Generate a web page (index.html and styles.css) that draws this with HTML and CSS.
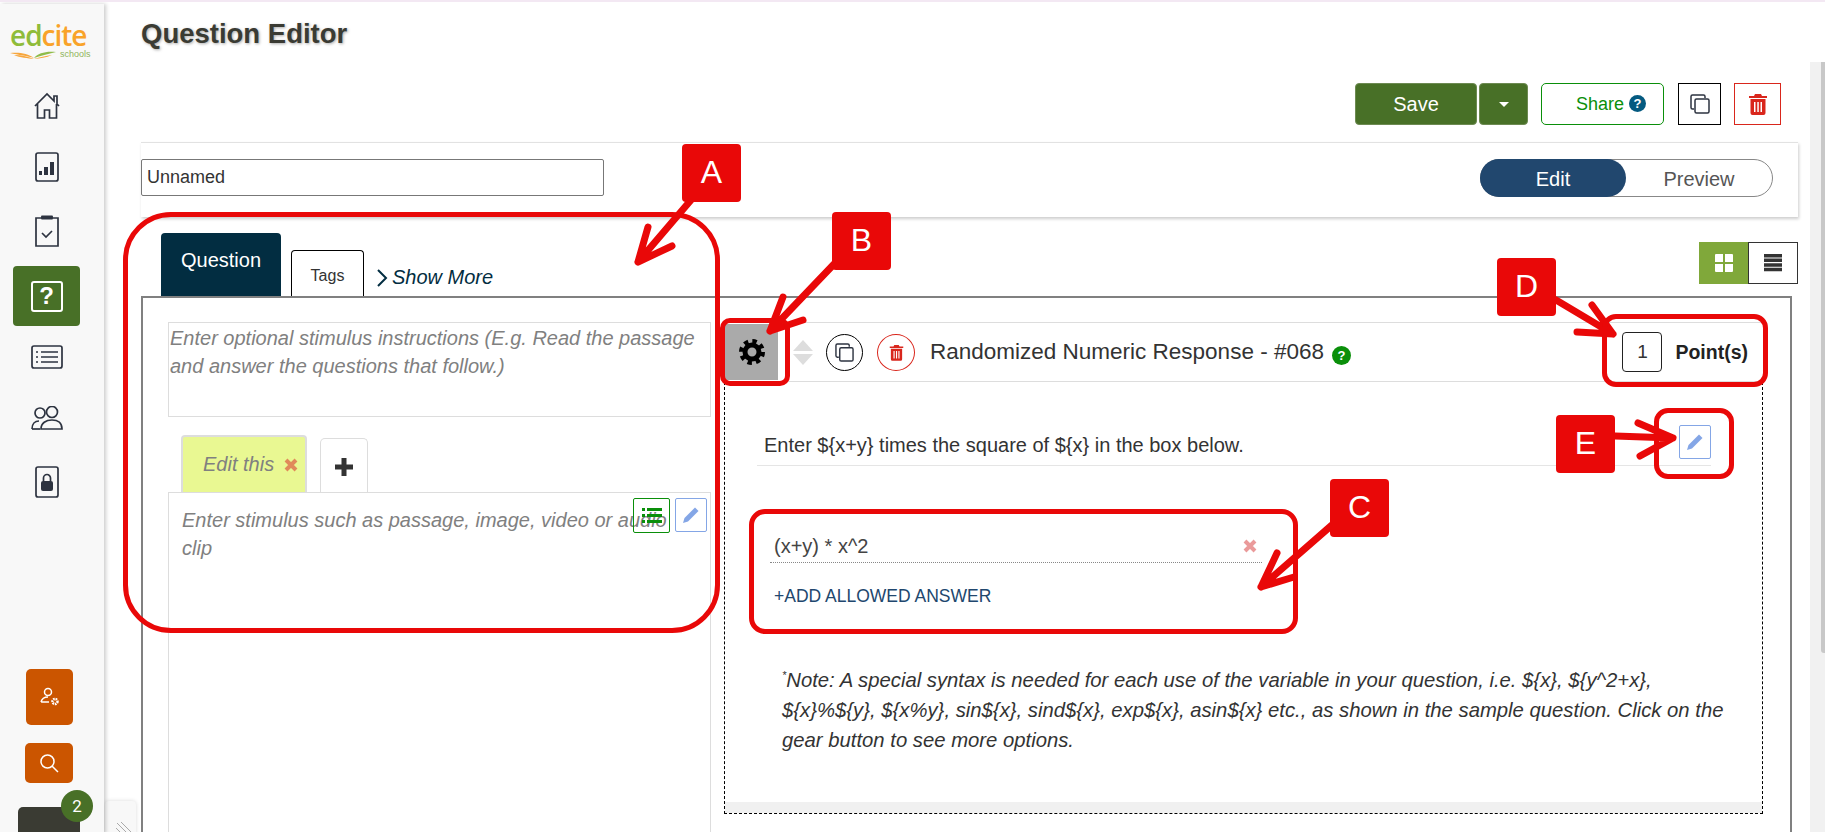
FILE: index.html
```html
<!DOCTYPE html>
<html lang="en">
<head>
<meta charset="utf-8">
<title>Question Editor</title>
<link rel="stylesheet" href="styles.css">
</head>
<body>
<div class="page">
  <aside class="sidebar">
    <div class="logo">
      <div class="logo-word"><span class="logo-ed">ed</span><span class="logo-cite">cite</span></div>
      <div class="logo-foot">
        <svg class="logo-book" viewBox="0 0 48 8" width="48" height="8"><path d="M0 2C8 1 18 2 24 7 18 5 8 4 0 2Z" fill="#f7a63c"/><path d="M46 1C36 0 28 2 24 7 30 5 38 3 46 1Z" fill="#8fbc4a"/><path d="M4 4C12 4 19 6 24 8 29 6 36 5 42 4 36 7 30 7 24 8 18 7 10 7 4 4Z" fill="#f7a63c"/></svg>
        <span class="logo-sub">schools</span>
      </div>
    </div>
    <nav class="nav">
      <a class="nav-item"><svg viewBox="0 0 28 28" width="28" height="28" class="ico"><path d="M2 14 14 2l7 7V4h3v8l2 2M4.500 12v14h7v-8h5v8h7V12"/></svg></a>
      <a class="nav-item"><svg viewBox="0 0 24 30" width="24" height="30" class="ico"><rect x="1" y="1" width="22" height="28" rx="2"/><path class="solid" d="M4 19h3v4H4zM9 15h4v8H9zM15 10h4v13h-4z"/></svg></a>
      <a class="nav-item nav-gap"><svg viewBox="0 0 24 32" width="24" height="32" class="ico"><path d="M6 3H1v28h22V3h-5"/><rect class="solid" x="6" y="0.500" width="12" height="4" rx="1"/><path d="M7 18l4 4 6-6"/></svg></a>
      <a class="nav-item nav-active"><span class="q-box">?</span></a>
      <a class="nav-item"><svg viewBox="0 0 32 24" width="32" height="24" class="ico"><rect x="1" y="1" width="30" height="22" rx="2"/><path d="M10 7h17M10 12h17M10 17h17M5 7h2M5 12h2M5 17h2"/></svg></a>
      <a class="nav-item"><svg viewBox="0 0 32 24" width="32" height="24" class="ico"><circle cx="9" cy="7" r="5"/><circle cx="21" cy="6" r="5.500"/><path d="M1 23c0-5 3-8 7-8M10 23c0-6 5-9 11-9s10 3 10 9Z"/><path d="M1 23h8"/></svg></a>
      <a class="nav-item nav-gap"><svg viewBox="0 0 24 32" width="24" height="32" class="ico"><rect x="1" y="1" width="22" height="30" rx="2"/><path d="M8.500 15v-3a3.500 3.500 0 0 1 7 0v3"/><rect class="solid" x="6" y="15" width="12" height="10" rx="2"/></svg></a>
    </nav>
    <div class="side-bottom">
      <a class="orange orange-user"><svg viewBox="0 0 20 20" width="20" height="20" class="ico-w"><circle cx="8" cy="5" r="3.500"/><path d="M1 15c1-4 4-5 7-5M1 15h8"/><circle cx="15" cy="14.500" r="2.500" stroke-width="2.500" stroke-dasharray="1.600 .8"/></svg></a>
      <a class="orange orange-search"><svg viewBox="0 0 20 20" width="20" height="20" class="ico-w"><circle cx="8.500" cy="8.500" r="6.500"/><path d="M13 13l6 6"/></svg></a>
      <div class="chat"><span class="chat-badge">2</span></div>
    </div>
  </aside>
  <div class="handle"><svg viewBox="0 0 16 16" width="16" height="16"><path d="M1 2l12 12M5 1l10 10M0 7l7 7" stroke="#aaa" stroke-width="1" fill="none"/></svg></div>

  <main class="main">
    <h1 class="title">Question Editor</h1>
    <div class="actions">
      <button class="btn-save">Save</button>
      <button class="btn-caret"><span class="caret"></span></button>
      <button class="btn-share">Share <span class="share-q">?</span></button>
      <button class="btn-sq btn-copy"><svg viewBox="0 0 20 20" width="20" height="20" class="ico-copy"><path d="M4 15H2.500A1.500 1.500 0 0 1 1 13.500v-11A1.500 1.500 0 0 1 2.500 1h11A1.500 1.500 0 0 1 15 2.500V4"/><rect x="5" y="5" width="14" height="14" rx="1.500"/></svg></button>
      <button class="btn-sq btn-trash"><svg viewBox="0 0 20 22" width="20" height="22"><path class="trash" d="M7 1h6l1 2h5v2H1V3h5zM2.500 6h15v14a2 2 0 0 1-2 2h-11a2 2 0 0 1-2-2zM6 9v10h1.500V9zM9.300 9v10h1.500V9zM12.500 9v10H14V9z"/></svg></button>
    </div>

    <section class="name-panel">
      <div class="name-input">Unnamed</div>
      <div class="toggle"><span class="toggle-on">Edit</span><span class="toggle-off">Preview</span></div>
    </section>

    <div class="tabs-row">
      <div class="tab tab-on">Question</div>
      <div class="tab tab-off">Tags</div>
      <div class="show-more"><svg viewBox="0 0 12 18" width="12" height="18"><path d="M2 1l8 8-8 8" fill="none" stroke="#022d41" stroke-width="2"/></svg><span>Show More</span></div>
      <div class="view-toggle">
        <span class="view view-grid"><svg viewBox="0 0 18 18" width="18" height="18"><path d="M0 1a1 1 0 0 1 1-1h7v8H0zM10 0h7a1 1 0 0 1 1 1v7h-8zM0 10h8v8H1a1 1 0 0 1-1-1zM10 10h8v7a1 1 0 0 1-1 1h-7z" fill="#fff"/></svg></span>
        <span class="view view-list"><svg viewBox="0 0 18 18" width="18" height="18"><path d="M0 0h18v3.500H0zM0 4.600h18v3.500H0zM0 9.200h18v3.500H0zM0 13.800h18v3.500H0z" fill="#333"/></svg></span>
      </div>
    </div>

    <section class="outer">
      <div class="left-col">
        <div class="inst">Enter optional stimulus instructions (E.g. Read the passage and answer the questions that follow.)</div>
        <div class="stim-tabs">
          <div class="stim-tab">Edit this <svg class="x-mark x-orange" viewBox="0 0 14 14" width="14" height="14"><path d="M2 2l10 10M12 2 2 12"/></svg></div>
          <div class="stim-add"><svg viewBox="0 0 18 18" width="18" height="18"><path d="M6.500 0h5v6.500H18v5h-6.500V18h-5v-6.500H0v-5h6.500z" fill="#333"/></svg></div>
        </div>
        <div class="stim-box">
          Enter stimulus such as passage, image, video or audio clip
          <div class="stim-tools">
            <span class="tool tool-green"><svg viewBox="0 0 20 15" width="20" height="15"><path d="M0 0h3v3H0zM5 0h15v3H5zM0 6h3v3H0zM5 6h15v3H5zM0 12h3v3H0zM5 12h15v3H5z" fill="#0a8f0a"/></svg></span>
            <span class="tool tool-blue"><svg viewBox="0 0 18 18" width="18" height="18"><path class="pencil" d="M13 1.500l3.500 3.500L6 15.500 1 17l1.500-5z"/></svg></span>
          </div>
        </div>
      </div>

      <div class="right-col">
        <header class="qhead">
          <div class="gear">
            <svg viewBox="0 0 28 28" width="28" height="28"><circle cx="14" cy="14" r="7" fill="none" stroke="#000" stroke-width="5"/><circle cx="14" cy="14" r="10.500" fill="none" stroke="#000" stroke-width="5" stroke-dasharray="4.250 4"/></svg>
          </div>
          <div class="updown"><span class="up"></span><span class="down"></span></div>
          <span class="circ circ-copy"><svg viewBox="0 0 20 20" width="19" height="19" class="ico-copy"><path d="M4 15H2.500A1.500 1.500 0 0 1 1 13.500v-11A1.500 1.500 0 0 1 2.500 1h11A1.500 1.500 0 0 1 15 2.500V4"/><rect x="5" y="5" width="14" height="14" rx="1.500"/></svg></span>
          <span class="circ circ-trash"><svg viewBox="0 0 20 22" width="15" height="17"><path class="trash" d="M7 1h6l1 2h5v2H1V3h5zM2.500 6h15v14a2 2 0 0 1-2 2h-11a2 2 0 0 1-2-2zM6 9v10h1.500V9zM9.300 9v10h1.500V9zM12.500 9v10H14V9z"/></svg></span>
          <span class="qtitle">Randomized Numeric Response - #068</span>
          <span class="qhelp">?</span>
          <div class="points"><span class="points-box">1</span><span class="points-label">Point(s)</span></div>
        </header>
        <div class="qbody">
          <div class="prompt">
            <span class="prompt-text">Enter ${x+y} times the square of ${x} in the box below.</span>
            <span class="tool tool-blue tool-edit"><svg viewBox="0 0 18 18" width="18" height="18"><path class="pencil" d="M13 1.500l3.500 3.500L6 15.500 1 17l1.500-5z"/></svg></span>
          </div>
          <div class="answers">
            <div class="answer"><span>(x+y) * x^2</span><svg class="x-mark x-pink" viewBox="0 0 14 14" width="14" height="14"><path d="M2 2l10 10M12 2 2 12"/></svg></div>
            <div class="add-answer">+ADD ALLOWED ANSWER</div>
          </div>
          <p class="note"><sup>*</sup>Note: A special syntax is needed for each use of the variable in your question, i.e. ${x}, ${y^2+x}, ${x}%${y}, ${x%y}, sin${x}, sind${x}, exp${x}, asin${x} etc., as shown in the sample question. Click on the gear button to see more options.</p>
          <div class="strip"></div>
        </div>
      </div>
    </section>
  </main>
  <div class="scroll-track"><div class="scroll-thumb"></div></div>

  <div class="marks">
    <svg class="arrows" viewBox="0 0 1825 832" width="1825" height="832">
      <path d="M691 200 638 262M648 227 638 262 672 246"/>
      <path d="M836 262 770 331M783 297 770 331 803 320"/>
      <path d="M1332 525 1261 587M1277 553 1261 587 1294 577"/>
      <path d="M1556 300 1613 334M1592 305 1613 334 1577 332"/>
      <path d="M1615 436 1673 438M1638 423 1673 438 1640 456"/>
    </svg>
    <div class="ring ring-a"></div>
    <div class="ring ring-b"></div>
    <div class="ring ring-c"></div>
    <div class="ring ring-d"></div>
    <div class="ring ring-e"></div>
    <div class="tag tag-a">A</div>
    <div class="tag tag-b">B</div>
    <div class="tag tag-c">C</div>
    <div class="tag tag-d">D</div>
    <div class="tag tag-e">E</div>
  </div>
</div>
</body>
</html>
```

FILE: styles.css
```css
* { box-sizing: border-box; }
html, body { margin: 0; padding: 0; height: 832px; overflow: hidden; background: #fff; }
body { font-family: "Liberation Sans", Arial, sans-serif; color: #333; }
button { font-family: inherit; cursor: pointer; padding: 0; }

.page { position: relative; display: flex; width: 1825px; height: 832px; overflow: hidden; border-top: 2px solid #f3e8f3; }

/* Sidebar */
.sidebar { position: relative; z-index: 2; flex: none; display: flex; flex-direction: column; width: 104px; height: 830px; margin-top: 2px; background: #f8f8f8; box-shadow: 2px 0 4px rgba(0,0,0,.2); }
.logo { height: 71px; padding: 19px 0 0 10px; }
.logo-word { font-size: 28px; line-height: 24px; font-family: "Open Sans", "Liberation Sans", sans-serif; font-weight: 600; letter-spacing: -1px; }
.logo-ed { color: #8fbc3a; }
.logo-cite { color: #f9a32a; }
.logo-foot { display: flex; align-items: flex-end; margin-top: 3px; }
.logo-book { display: block; }
.logo-sub { margin: 0 0 0 2px; font-size: 9px; line-height: 9px; color: #8fb55a; }
.nav { display: flex; flex-direction: column; padding-left: 13px; }
.nav-item { display: flex; align-items: center; justify-content: center; width: 67px; height: 61px; }
.nav-gap { margin-top: 3px; }
.nav-active { height: 60px; margin-top: 5px; background: #487027; border-radius: 4px; }
.ico { fill: none; stroke: #2d3340; stroke-width: 1.700; }
.ico .solid { fill: #2d3340; stroke: none; }
.q-box { display: flex; align-items: center; justify-content: center; width: 32px; height: 31px; border: 2px solid #fff; border-radius: 3px; color: #fff; font-size: 24px; font-weight: 700; }
.side-bottom { margin-top: auto; display: flex; flex-direction: column; }
.orange { display: flex; align-items: center; justify-content: center; background: #cb5500; border-radius: 5px; }
.orange-user { width: 47px; height: 56px; margin-left: 26px; }
.orange-search { width: 48px; height: 40px; margin: 18px 0 24px 25px; }
.ico-w { fill: none; stroke: #fff; stroke-width: 1.500; }
.chat { position: relative; width: 62px; height: 27px; margin-left: 18px; background: #3a3b33; border-radius: 5px 5px 0 0; }
.chat-badge { position: absolute; top: -17px; left: 43px; display: flex; align-items: center; justify-content: center; width: 32px; height: 32px; border-radius: 50%; background: #487027; color: #fff; font-size: 17px; font-family: Roboto, sans-serif; }
.handle { position: absolute; left: 105px; top: 799px; z-index: 1; width: 31px; height: 40px; padding: 20px 0 0 11px; background: #f8f8f8; border-radius: 4px; box-shadow: 0 0 4px rgba(0,0,0,.15); }

/* Main column */
.main { flex: none; width: 1721px; padding-left: 37px; padding-right: 27px; }
.title { margin: 0; padding-top: 15px; height: 81px; font-size: 27.500px; line-height: 34px; font-weight: 700; color: #3a3b33; text-shadow: 1px 1px 3px #aaa; }
.actions { display: flex; justify-content: flex-end; align-items: flex-start; padding-right: 17px; height: 59px; }
.btn-save { width: 122px; height: 42px; padding-top: 1px; background: #487027; border: 1px solid #6d8a52; border-radius: 4px; color: #fff; font-size: 20px; }
.btn-caret { display: flex; align-items: center; justify-content: center; width: 49px; height: 42px; margin-left: 2px; background: #487027; border: 1px solid #6d8a52; border-radius: 4px; }
.caret { width: 0; height: 0; border: 5px solid transparent; border-top-color: #fff; border-bottom: 0; }
.btn-share { width: 123px; height: 42px; margin-left: 13px; padding-left: 34px; text-align: left; background: #fff; border: 1px solid #0a8f0a; border-radius: 5px; color: #0a8f0a; font-size: 18px; white-space: nowrap; }
.share-q { display: inline-flex; align-items: center; justify-content: center; width: 17px; height: 17px; border-radius: 50%; background: #045a80; color: #fff; font-size: 13px; font-weight: 700; vertical-align: 2px; }
.btn-sq { display: flex; align-items: center; justify-content: center; height: 42px; background: #fff; }
.btn-copy { width: 43px; margin-left: 14px; border: 1px solid #000; }
.btn-trash { width: 47px; margin-left: 13px; border: 1px solid #d9261c; }
.ico-copy { fill: none; stroke: #2d3340; stroke-width: 1.500; }
.trash { fill: #d9261c; fill-rule: evenodd; }

.name-panel { display: flex; align-items: center; justify-content: space-between; height: 75px; padding: 0 25px 4px 0; border-top: 1px solid #e2e2e2; box-shadow: 1px 2px 3px rgba(0,0,0,.2); }
.name-input { width: 463px; height: 37px; margin-top: -2px; padding-left: 5px; border: 1px solid #777; border-radius: 2px; font-size: 18px; line-height: 35px; color: #333; }
.toggle { display: flex; width: 293px; height: 38px; border: 1px solid #888; border-radius: 19px; font-size: 20px; line-height: 38px; text-align: center; }
.toggle-on { width: 146px; margin: -1px 0 -1px -1px; line-height: 40px; background: #21476e; color: #fff; border-radius: 19px; }
.toggle-off { flex: 1; color: #555; }

.tabs-row { display: flex; align-items: flex-end; height: 79px; padding-left: 20px; }
.tab { text-align: center; border-radius: 4px 4px 0 0; }
.tab-on { width: 120px; height: 63px; background: #022d41; color: #fff; font-size: 20px; line-height: 54px; }
.tab-off { width: 73px; height: 46px; margin-left: 10px; border: 1px solid #000; border-bottom: 0; font-size: 16px; line-height: 50px; }
.show-more { display: flex; align-items: center; margin: 0 0 7px 12px; color: #022d41; font-size: 20px; font-style: italic; }
.show-more span { margin-left: 4px; }
.view-toggle { display: flex; margin: 0 0 12px auto; }
.view { display: flex; align-items: center; justify-content: center; width: 49px; height: 42px; }
.view-grid { background: #80a83a; }
.view-list { width: 50px; border: 1px solid #333; }

.outer { display: flex; height: 600px; margin-right: 6px; padding: 24px 0 0 25px; border: 2px solid #808080; border-bottom: 0; }
.left-col { flex: none; width: 543px; }
.inst { height: 95px; padding: 1px 0 0 1px; border: 1px solid #ddd; font-size: 20px; line-height: 28px; font-style: italic; color: #808080; }
.stim-tabs { display: flex; align-items: flex-end; margin: 18px 0 0 13px; height: 57px; }
.stim-tab { display: flex; align-items: center; width: 126px; height: 57px; padding-left: 20px; border: 2px solid #ddd; border-bottom: 0; border-radius: 4px 4px 0 0; background: #e9f892; font-size: 20px; font-style: italic; color: #808080; white-space: nowrap; }
.x-mark { flex: none; fill: none; stroke-width: 4; }
.x-orange { margin-left: 10px; stroke: #e08a5a; }
.x-pink { margin-top: 9px; stroke: #ea9a9a; }
.stim-add { display: flex; align-items: center; justify-content: center; width: 48px; height: 54px; margin-left: 13px; padding-top: 2px; border: 1px solid #ddd; border-bottom: 0; border-radius: 5px 5px 0 0; }
.stim-box { position: relative; height: 400px; padding: 13px 14px 0 13px; border: 1px solid #ddd; font-size: 20px; line-height: 28px; font-style: italic; color: #808080; }
.stim-tools { position: absolute; top: 5px; right: 3px; display: flex; gap: 5px; }
.tool { display: flex; align-items: center; justify-content: center; height: 34px; border-radius: 2px; background: transparent; }
.tool-green { width: 37px; height: 35px; border: 1px solid #0a8f0a; }
.tool-blue { width: 32px; border: 1px solid #84a6e6; }
.pencil { fill: #84a6e6; }

.right-col { flex: none; width: 1039px; margin-left: 13px; }
.qhead { display: flex; align-items: center; height: 60px; padding-right: 15px; border-top: 1px solid #ddd; border-bottom: 1px solid #ddd; }
.gear { display: flex; align-items: center; justify-content: center; width: 53px; height: 56px; margin: 0 0 0 1px; background: #aaa; }
.updown { display: flex; flex-direction: column; gap: 3px; margin-left: 15px; }
.up, .down { width: 0; height: 0; border-left: 10px solid transparent; border-right: 10px solid transparent; }
.up { border-bottom: 11px solid #ddd; }
.down { border-top: 11px solid #ddd; }
.circ { display: flex; align-items: center; justify-content: center; width: 37px; height: 37px; border-radius: 50%; border: 1px solid #000; }
.circ-copy { margin-left: 13px; }
.circ-trash { width: 38px; margin-left: 14px; border-color: #d9261c; }
.qtitle { margin-left: 15px; font-size: 22.500px; color: #333; white-space: nowrap; }
.qhelp { display: flex; align-items: center; justify-content: center; width: 19px; height: 19px; margin: 6px 0 0 8px; border-radius: 50%; background: #0a8f0a; color: #fff; font-size: 13px; font-weight: 700; }
.points { display: flex; align-items: center; margin-left: auto; }
.points-box { width: 40px; height: 40px; border: 1px solid #222; border-radius: 4px; text-align: center; font-size: 19px; line-height: 38px; }
.points-label { margin-left: 13px; font-size: 19.500px; font-weight: 700; color: #222; }

.qbody { display: flex; flex-direction: column; height: 432px; border: 1px dashed #000; border-top: 0; }
.prompt { display: flex; justify-content: space-between; margin: 0 51px 0 32px; padding: 43px 0 6px 7px; border-bottom: 1px solid #e5e5e5; }
.prompt-text { padding-top: 8px; font-size: 20px; line-height: 24px; color: #333; }
.answers { width: 492px; margin: 64px 0 0 45px; }
.answer { display: flex; justify-content: space-between; height: 33px; padding: 0 5px 0 4px; border-bottom: 1px dotted #888; font-size: 20px; line-height: 32px; color: #444; }
.add-answer { margin-top: 23px; padding-left: 4px; font-size: 17.500px; line-height: 20px; color: #21476e; white-space: nowrap; }
.note { width: 955px; margin: 59px 0 0 57px; font-size: 20.300px; line-height: 30px; font-style: italic; color: #333; }
.note sup { font-size: 11px; line-height: 0; }
.strip { height: 11px; margin-top: auto; background: #f0f0f0; }

.scroll-track { position: absolute; right: 0; top: 60px; bottom: 0; width: 15px; background: #f1f1f1; }
.scroll-thumb { width: 4px; height: 591px; margin-left: 11px; background: #c8c8c8; border-radius: 0 0 0 3px; }

/* Annotation layer */
.marks { position: absolute; inset: -2px 0 0 0; z-index: 5; pointer-events: none; }
.arrows { position: absolute; left: 0; top: 0; }
.arrows path { fill: none; stroke: #e90808; stroke-width: 7; stroke-linecap: round; stroke-linejoin: round; }
.ring { position: absolute; border: 5px solid #e90808; }
.ring-a { left: 123px; top: 212px; width: 597px; height: 421px; border-radius: 48px; }
.ring-b { left: 720px; top: 318px; width: 70px; height: 68px; border-radius: 10px; }
.ring-c { left: 749px; top: 509px; width: 549px; height: 125px; border-radius: 16px; }
.ring-d { left: 1602px; top: 314px; width: 166px; height: 73px; border-radius: 14px; }
.ring-e { left: 1654px; top: 408px; width: 80px; height: 71px; border-radius: 14px; }
.tag { position: absolute; width: 59px; height: 58px; background: #e90808; border-radius: 4px; color: #fff; font-size: 32px; line-height: 56px; text-align: center; }
.tag-a { left: 682px; top: 144px; }
.tag-b { left: 832px; top: 212px; }
.tag-c { left: 1330px; top: 479px; }
.tag-d { left: 1497px; top: 258px; }
.tag-e { left: 1556px; top: 415px; }
```
